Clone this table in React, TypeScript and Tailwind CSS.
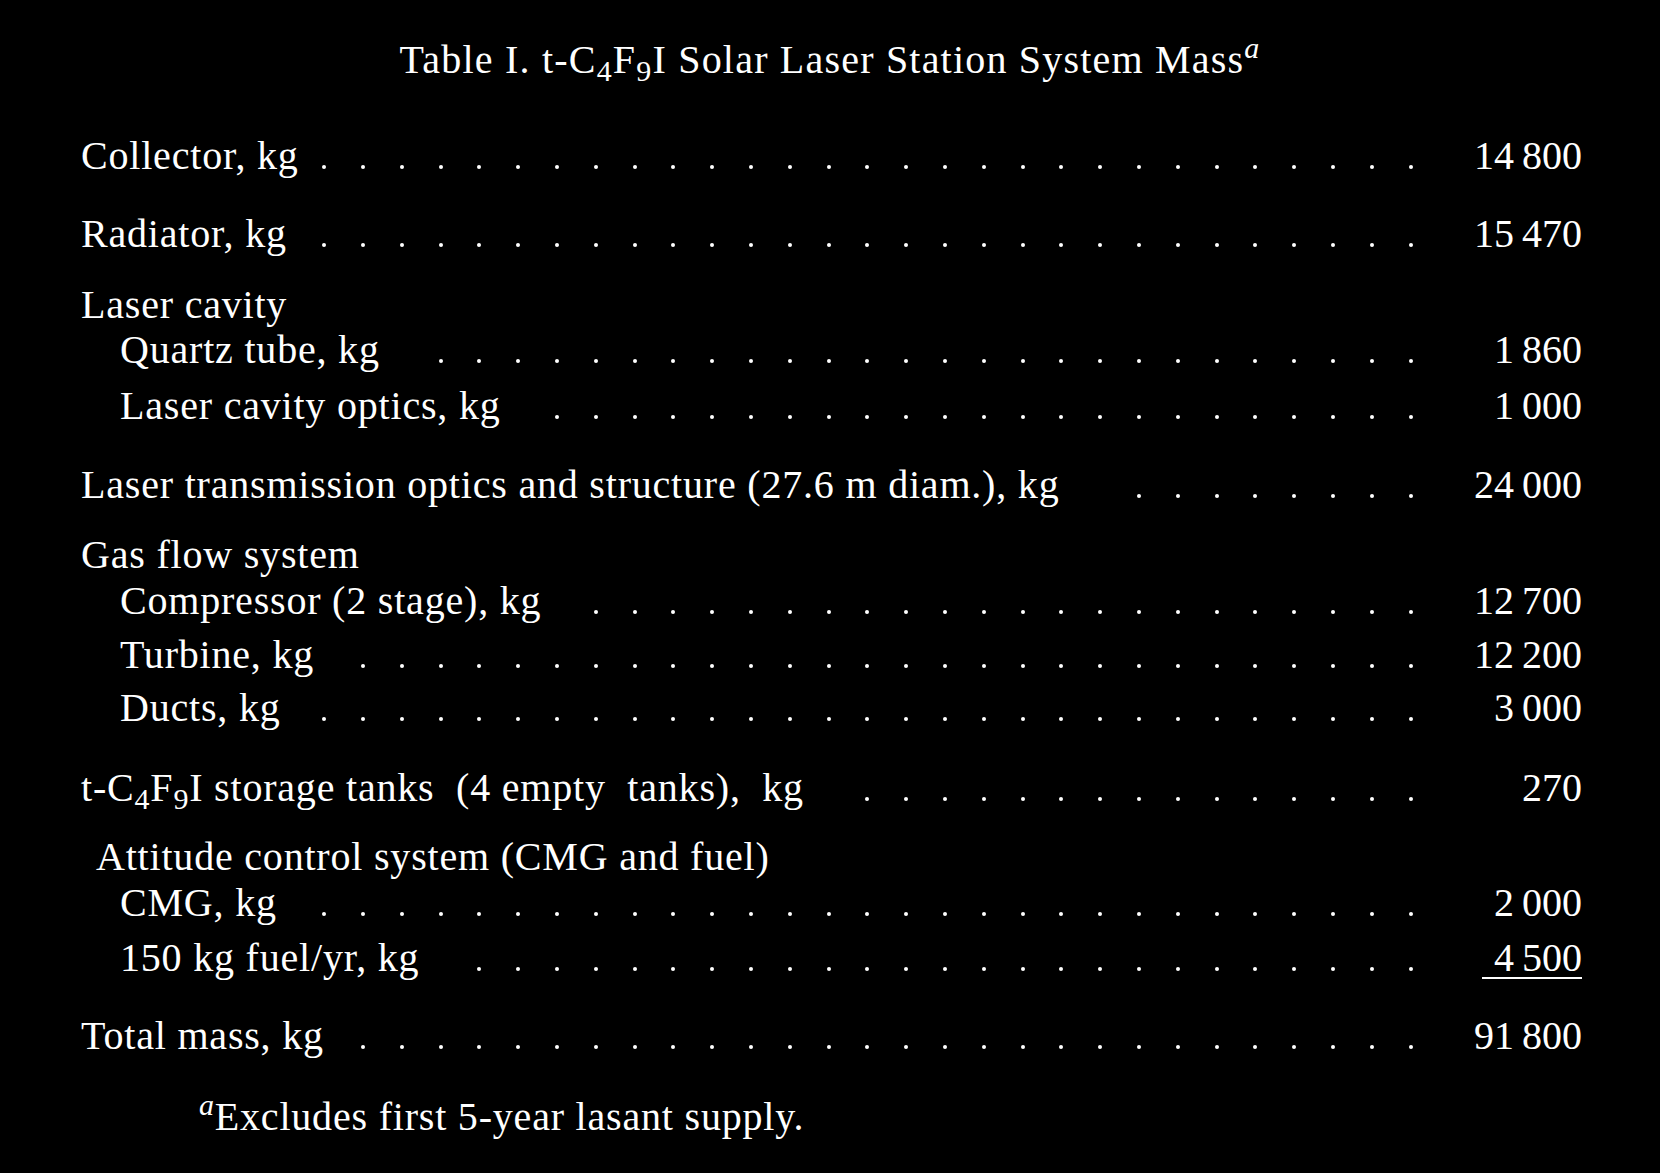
import React from 'react';

type Row = {
  label: React.ReactNode;
  value?: string;
  dots?: number;
  mt: string;
  pad?: string;
  underline?: boolean;
};

const Formula = () => (
  <>
    t-C<sub>4</sub>F<sub>9</sub>I
  </>
);

const rows: Row[] = [
  { label: 'Collector, kg', value: '14\u2009800', dots: 29, mt: 'mt-[56px]' },
  { label: 'Radiator, kg', value: '15\u2009470', dots: 29, mt: 'mt-[38px]' },
  { label: 'Laser cavity', mt: 'mt-[31px]' },
  { label: 'Quartz tube, kg', value: '1\u2009860', dots: 26, mt: 'mt-[5px]', pad: 'pl-[39px]' },
  { label: 'Laser cavity optics, kg', value: '1\u2009000', dots: 23, mt: 'mt-[16px]', pad: 'pl-[39px]' },
  { label: 'Laser transmission optics and structure (27.6 m diam.), kg', value: '24\u2009000', dots: 8, mt: 'mt-[39px]' },
  { label: 'Gas flow system', mt: 'mt-[30px]' },
  { label: 'Compressor (2 stage), kg', value: '12\u2009700', dots: 22, mt: 'mt-[6px]', pad: 'pl-[39px]' },
  { label: 'Turbine, kg', value: '12\u2009200', dots: 28, mt: 'mt-[14px]', pad: 'pl-[39px]' },
  { label: 'Ducts, kg', value: '3\u2009000', dots: 29, mt: 'mt-[13px]', pad: 'pl-[39px]' },
  {
    label: (
      <>
        <Formula />
        {' storage tanks  (4 empty  tanks),  kg'}
      </>
    ),
    value: '270',
    dots: 15,
    mt: 'mt-[40px]',
  },
  { label: 'Attitude control system (CMG and fuel)', mt: 'mt-[29px]', pad: 'pl-[15px]' },
  { label: 'CMG, kg', value: '2\u2009000', dots: 29, mt: 'mt-[6px]', pad: 'pl-[39px]' },
  { label: '150 kg fuel/yr, kg', value: '4\u2009500', dots: 25, mt: 'mt-[15px]', pad: 'pl-[39px]', underline: true },
  { label: 'Total mass, kg', value: '91\u2009800', dots: 28, mt: 'mt-[37px]' },
];

// leader dots, counted from the right so every row sits on the same grid
const Leaders = ({ count }: { count: number }) => (
  <div className="ml-auto mt-[29px] flex self-start">
    {Array.from({ length: count }).map((_, i) => (
      <div key={i} className="w-[38.8px] flex justify-center">
        <div className="w-[4px] h-[4px] rounded-full bg-white" />
      </div>
    ))}
  </div>
);

const TableRow = ({ row }: { row: Row }) => (
  <div className={`flex ${row.mt}`}>
    <div className={`whitespace-pre shrink-0 tracking-[0.8px] ${row.pad ?? ''}`}>{row.label}</div>
    {row.value !== undefined && <Leaders count={row.dots ?? 0} />}
    {row.value !== undefined && (
      <div className="w-[152px] shrink-0 text-right">
        {row.underline ? (
          <span className="inline-block w-[100px] text-right border-b-2 border-white leading-[38px]">{row.value}</span>
        ) : (
          row.value
        )}
      </div>
    )}
  </div>
);

export default function App() {
  return (
    <div className="w-[1660px] h-[1173px] bg-black text-white font-['Liberation_Serif',serif] text-[40px] leading-[40px] pt-[40px]">
      <div className="text-center tracking-[1.2px]">
        Table I. <Formula /> Solar Laser Station System Mass<sup className="italic">a</sup>
      </div>
      <div className="pl-[81px] pr-[78px]">
        {rows.map((row, i) => (
          <TableRow key={i} row={row} />
        ))}
        <div className="mt-[41px] pl-[118px] tracking-[0.8px]">
          <sup className="italic">a</sup>Excludes first 5-year lasant supply.
        </div>
      </div>
    </div>
  );
}
